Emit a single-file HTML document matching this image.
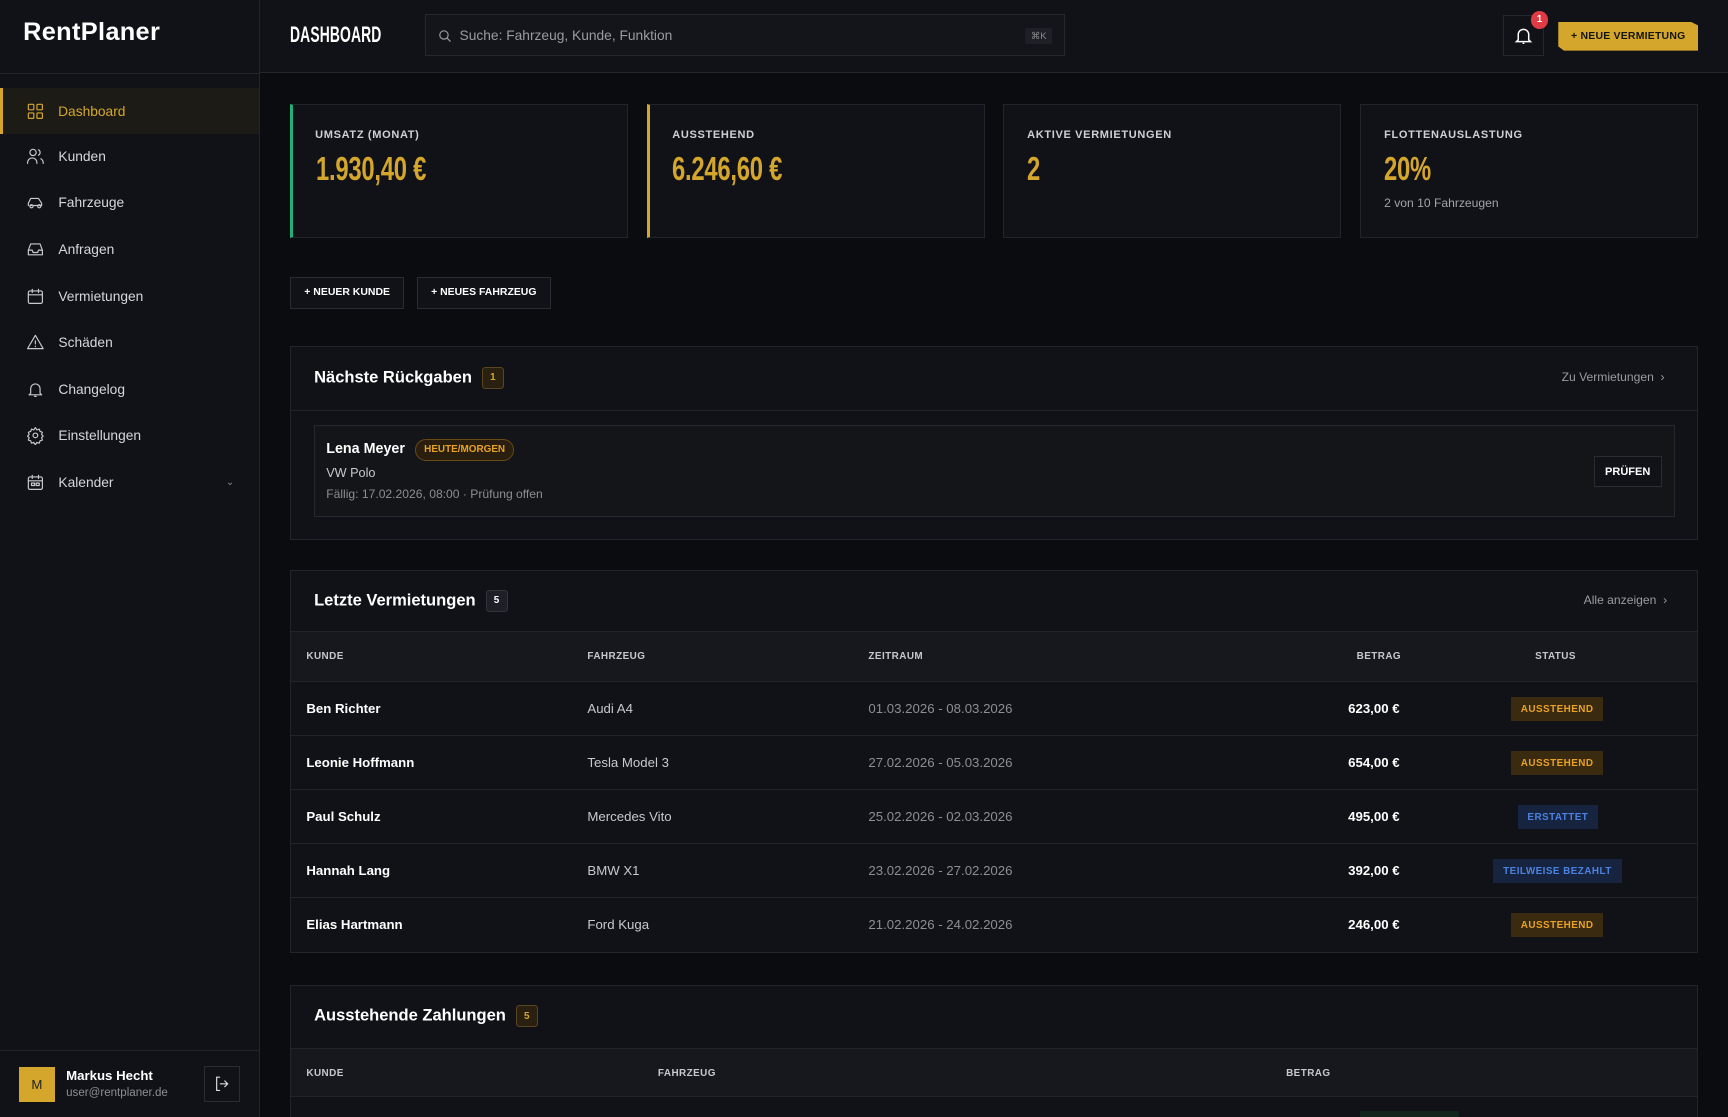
<!DOCTYPE html>
<html><head><meta charset="utf-8"><style>
*{box-sizing:border-box;margin:0;padding:0}
html,body{background:#0b0c10;overflow:hidden}
body{width:1568px;height:1014px;zoom:1.10204;font-family:"Liberation Sans",sans-serif;color:#e8e8ea;position:relative}
.abs{position:absolute}
.side{left:0;top:0;width:236px;height:1014px;background:#111218;border-right:1px solid #23252d}
.logo{left:21px;top:16px;font-size:23px;font-weight:bold;color:#fff;letter-spacing:.3px}
.sidehr{left:0;top:66px;width:236px;border-top:1px solid #23252d}
.nav{left:0;width:235px;height:42px;display:flex;align-items:center;font-size:12.5px;color:#d6d7db}
.nav svg{margin-left:24px;margin-right:12px;width:17px;height:17px;fill:none;stroke:#c9cace;stroke-width:1.5;stroke-linecap:round;stroke-linejoin:round}
.nav.act{background:#1d1b15;color:#d4a72c;border-left:3px solid #d4a72c}
.nav.act svg{margin-left:21px;stroke:#d4a72c}
.head{left:236px;top:0;width:1332px;height:66px;background:#111218;border-bottom:1px solid #23252d}
.cond{font-weight:bold;transform:scaleX(.72);transform-origin:0 0;white-space:nowrap}
.card{background:#111218;border:1px solid #23252d}
.lbl{font-size:10px;font-weight:bold;letter-spacing:.6px;color:#cfd0d4}
.val{font-size:30px;color:#d4a72c;letter-spacing:-.3px}
.btn{border:1px solid #2a2c34;background:#111218;font-size:9.5px;font-weight:bold;color:#fff;display:flex;align-items:center;justify-content:center}
.sec-title{font-size:15px;font-weight:bold;color:#fff}
.cnt{display:inline-flex;width:20px;height:20px;border-radius:3px;align-items:center;justify-content:center;font-size:9px;font-weight:bold;vertical-align:middle;margin-left:9px}
.th{font-size:9px;font-weight:bold;color:#c7c8cc;letter-spacing:.4px}
.row{left:264px;width:1276px;height:49px;border-top:1px solid #22242b}
.row div{position:absolute;top:17px;font-size:12px}
.pill{position:absolute;top:14px;height:21px;font-size:9px;font-weight:bold;letter-spacing:.4px;display:flex;align-items:center;padding:0 9px}
.p-o{background:#3a2a10;color:#e8a325}
.p-b{background:#172440;color:#4b82e0}
</style></head><body>
<div class="abs side"></div>
<div class="abs logo">RentPlaner</div>
<div class="abs sidehr"></div>

<div class="abs nav act" style="top:80px"><svg viewBox="0 0 24 24"><rect x="3" y="3" width="7" height="7" rx="1"/><rect x="14" y="3" width="7" height="7" rx="1"/><rect x="3" y="14" width="7" height="7" rx="1"/><rect x="14" y="14" width="7" height="7" rx="1"/></svg>Dashboard</div>
<div class="abs nav" style="top:121px"><svg viewBox="0 0 24 24"><circle cx="9" cy="7" r="4"/><path d="M2 21v-1a6 6 0 0 1 12 0v1M16 3.5a4 4 0 0 1 0 7M22 21v-1a6 6 0 0 0-3-5"/></svg>Kunden</div>
<div class="abs nav" style="top:163px"><svg viewBox="0 0 24 24"><path d="M3 16v-3l3-6h10l4 6v3M5 16h2M17 16h2M9 16h6"/><circle cx="7" cy="17" r="2"/><circle cx="17" cy="17" r="2"/></svg>Fahrzeuge</div>
<div class="abs nav" style="top:205px"><svg viewBox="0 0 24 24"><path d="M3 13l3-8h12l3 8v6H3zM3 13h5l1 3h6l1-3h5"/></svg>Anfragen</div>
<div class="abs nav" style="top:248px"><svg viewBox="0 0 24 24"><rect x="3" y="5" width="18" height="16" rx="2"/><path d="M3 10h18M8 3v4M16 3v4"/></svg>Vermietungen</div>
<div class="abs nav" style="top:290px"><svg viewBox="0 0 24 24"><path d="M12 3L2 20h20zM12 10v4M12 17v.5"/></svg>Schäden</div>
<div class="abs nav" style="top:332px"><svg viewBox="0 0 24 24"><path d="M6 17V11a6 6 0 0 1 12 0v6l2 2H4zM11 21h2"/></svg>Changelog</div>
<div class="abs nav" style="top:374px"><svg viewBox="0 0 24 24"><circle cx="12" cy="12" r="3"/><path d="M12 2l2 3 3-1 1 3 3 1-1 3 2 2-2 2 1 3-3 1-1 3-3-1-2 3-2-3-3 1-1-3-3-1 1-3-2-2 2-2-1-3 3-1 1-3 3 1z"/></svg>Einstellungen</div>
<div class="abs nav" style="top:417px"><svg viewBox="0 0 24 24"><rect x="3" y="5" width="18" height="16" rx="2"/><path d="M3 10h18M8 3v4M16 3v4"/><rect x="7" y="13" width="4" height="3"/><rect x="13" y="13" width="4" height="3"/></svg>Kalender<span style="position:absolute;left:205px;font-size:9px;color:#888">⌄</span></div>

<div class="abs" style="left:0;top:953px;width:236px;border-top:1px solid #23252d"></div>
<div class="abs" style="left:17px;top:968px;width:33px;height:32px;background:#d4a72c;color:#222;font-size:12px;display:flex;align-items:center;justify-content:center">M</div>
<div class="abs" style="left:60px;top:969px;font-size:12px;font-weight:bold;color:#fff">Markus Hecht</div>
<div class="abs" style="left:60px;top:986px;font-size:10.5px;color:#8d8e94">user@rentplaner.de</div>
<div class="abs" style="left:185px;top:967px;width:33px;height:33px;border:1px solid #2a2c34;display:flex;align-items:center;justify-content:center"><svg width="16" height="16" viewBox="0 0 24 24" fill="none" stroke="#ddd" stroke-width="1.6" stroke-linecap="round"><path d="M9 3H5v18h4M10 12h10M16 8l4 4-4 4"/></svg></div>

<div class="abs head"></div>
<div class="abs cond" style="left:263px;top:20px;font-size:20px;color:#fff;letter-spacing:.2px;transform:scaleX(.63)">DASHBOARD</div>
<div class="abs" style="left:386px;top:13px;width:580px;height:38px;border:1px solid #262830;background:#14151b"></div>
<svg class="abs" style="left:397px;top:26px" width="13" height="13" viewBox="0 0 24 24" fill="none" stroke="#9a9ba0" stroke-width="2"><circle cx="10" cy="10" r="7"/><path d="M15 15l6 6"/></svg>
<div class="abs" style="left:417px;top:25px;font-size:12.5px;color:#9a9ba0">Suche: Fahrzeug, Kunde, Funktion</div>
<div class="abs" style="left:930px;top:25px;width:25px;height:15px;background:#1f2027;border-radius:2px;font-size:8.5px;color:#888;text-align:center;line-height:15px">⌘K</div>
<div class="abs" style="left:1364px;top:14px;width:37px;height:37px;border:1px solid #262830"></div>
<svg class="abs" style="left:1373px;top:23px" width="19" height="19" viewBox="0 0 24 24" fill="none" stroke="#fff" stroke-width="1.7"><path d="M6 17V11a6 6 0 0 1 12 0v6l2 2H4zM11 21h2"/></svg>
<div class="abs" style="left:1389px;top:10px;width:16px;height:16px;border-radius:50%;background:#e03a45;color:#fff;font-size:9px;font-weight:bold;text-align:center;line-height:16px">1</div>
<div class="abs" style="left:1414px;top:20px;width:127px;height:26px;background:#d4a72c;clip-path:polygon(0 0,95% 0,100% 12%,100% 100%,4% 100%,0 85%);color:#15150f;font-size:9.5px;font-weight:bold;display:flex;align-items:center;justify-content:center;letter-spacing:.2px">+ NEUE VERMIETUNG</div>

<!-- stat cards -->
<div class="abs card" style="left:263px;top:94px;width:307px;height:122px;border-left:3px solid #21b07a"></div>
<div class="abs lbl" style="left:286px;top:117px">UMSATZ (MONAT)</div>
<div class="abs cond val" style="left:287px;top:137px">1.930,40 €</div>
<div class="abs card" style="left:587px;top:94px;width:307px;height:122px;border-left:3px solid #d4a72c"></div>
<div class="abs lbl" style="left:610px;top:117px">AUSSTEHEND</div>
<div class="abs cond val" style="left:610px;top:137px">6.246,60 €</div>
<div class="abs card" style="left:910px;top:94px;width:307px;height:122px"></div>
<div class="abs lbl" style="left:932px;top:117px">AKTIVE VERMIETUNGEN</div>
<div class="abs cond val" style="left:932px;top:137px">2</div>
<div class="abs card" style="left:1234px;top:94px;width:307px;height:122px"></div>
<div class="abs lbl" style="left:1256px;top:117px">FLOTTENAUSLASTUNG</div>
<div class="abs cond val" style="left:1256px;top:137px">20%</div>
<div class="abs" style="left:1256px;top:178px;font-size:11px;color:#a2a3a8">2 von 10 Fahrzeugen</div>

<div class="abs btn" style="left:263px;top:251px;width:104px;height:29px">+ NEUER KUNDE</div>
<div class="abs btn" style="left:378px;top:251px;width:122px;height:29px">+ NEUES FAHRZEUG</div>

<!-- section 1 -->
<div class="abs card" style="left:263px;top:314px;width:1278px;height:176px"></div>
<div class="abs sec-title" style="left:285px;top:333px">Nächste Rückgaben<span class="cnt" style="background:#2a2010;border:1px solid #5a4520;color:#d4a72c">1</span></div>
<div class="abs" style="left:1417px;top:336px;font-size:11px;color:#9a9ba0">Zu Vermietungen &nbsp;›</div>
<div class="abs" style="left:264px;top:372px;width:1276px;border-top:1px solid #22242b"></div>
<div class="abs" style="left:285px;top:386px;width:1235px;height:83px;border:1px solid #262830;background:#141519"></div>
<div class="abs" style="left:296px;top:400px;font-size:13px;font-weight:bold;color:#fff">Lena Meyer</div>
<div class="abs" style="left:377px;top:398px;height:20px;padding:0 7px;border:1px solid #6a4a15;border-radius:10px;background:#2a1f0e;color:#e8a325;font-size:9px;font-weight:bold;line-height:18px">HEUTE/MORGEN</div>
<div class="abs" style="left:296px;top:423px;font-size:11.5px;color:#c8c9cd">VW Polo</div>
<div class="abs" style="left:296px;top:442px;font-size:11px;color:#8d8e94">Fällig: 17.02.2026, 08:00 · Prüfung offen</div>
<div class="abs btn" style="left:1446px;top:414px;width:62px;height:28px;font-size:10px">PRÜFEN</div>

<!-- section 2 -->
<div class="abs card" style="left:263px;top:517px;width:1278px;height:348px"></div>
<div class="abs sec-title" style="left:285px;top:535px">Letzte Vermietungen<span class="cnt" style="background:#1f2027;border:1px solid #33353d;color:#fff">5</span></div>
<div class="abs" style="left:1437px;top:538px;font-size:11px;color:#9a9ba0">Alle anzeigen &nbsp;›</div>
<div class="abs" style="left:264px;top:573px;width:1276px;height:45px;background:#17181e;border-top:1px solid #22242b"></div>
<div class="abs th" style="left:278px;top:591px">KUNDE</div>
<div class="abs th" style="left:533px;top:591px">FAHRZEUG</div>
<div class="abs th" style="left:788px;top:591px">ZEITRAUM</div>
<div class="abs th" style="left:1231px;top:591px">BETRAG</div>
<div class="abs th" style="left:1393px;top:591px">STATUS</div>

<div class="abs row" style="top:618px"><div style="left:14px;font-weight:bold;color:#fff">Ben Richter</div><div style="left:269px;color:#c8c9cd">Audi A4</div><div style="left:524px;color:#8d8e94">01.03.2026 - 08.03.2026</div><div style="right:270px;font-weight:bold;color:#fff">623,00 €</div><span class="pill p-o" style="left:1107px">AUSSTEHEND</span></div>
<div class="abs row" style="top:667px"><div style="left:14px;font-weight:bold;color:#fff">Leonie Hoffmann</div><div style="left:269px;color:#c8c9cd">Tesla Model 3</div><div style="left:524px;color:#8d8e94">27.02.2026 - 05.03.2026</div><div style="right:270px;font-weight:bold;color:#fff">654,00 €</div><span class="pill p-o" style="left:1107px">AUSSTEHEND</span></div>
<div class="abs row" style="top:716px"><div style="left:14px;font-weight:bold;color:#fff">Paul Schulz</div><div style="left:269px;color:#c8c9cd">Mercedes Vito</div><div style="left:524px;color:#8d8e94">25.02.2026 - 02.03.2026</div><div style="right:270px;font-weight:bold;color:#fff">495,00 €</div><span class="pill p-b" style="left:1113px">ERSTATTET</span></div>
<div class="abs row" style="top:765px"><div style="left:14px;font-weight:bold;color:#fff">Hannah Lang</div><div style="left:269px;color:#c8c9cd">BMW X1</div><div style="left:524px;color:#8d8e94">23.02.2026 - 27.02.2026</div><div style="right:270px;font-weight:bold;color:#fff">392,00 €</div><span class="pill p-b" style="left:1091px">TEILWEISE BEZAHLT</span></div>
<div class="abs row" style="top:814px"><div style="left:14px;font-weight:bold;color:#fff">Elias Hartmann</div><div style="left:269px;color:#c8c9cd">Ford Kuga</div><div style="left:524px;color:#8d8e94">21.02.2026 - 24.02.2026</div><div style="right:270px;font-weight:bold;color:#fff">246,00 €</div><span class="pill p-o" style="left:1107px">AUSSTEHEND</span></div>

<!-- section 3 -->
<div class="abs card" style="left:263px;top:894px;width:1278px;height:130px"></div>
<div class="abs sec-title" style="left:285px;top:912px">Ausstehende Zahlungen<span class="cnt" style="background:#2a2010;border:1px solid #5a4520;color:#d4a72c">5</span></div>
<div class="abs" style="left:264px;top:951px;width:1276px;height:44px;background:#17181e;border-top:1px solid #22242b;border-bottom:1px solid #22242b"></div>
<div class="abs th" style="left:278px;top:969px">KUNDE</div>
<div class="abs th" style="left:597px;top:969px">FAHRZEUG</div>
<div class="abs th" style="left:1167px;top:969px">BETRAG</div>
<div class="abs" style="left:1234px;top:1008px;width:90px;height:8px;background:#12251c"></div>
</body></html>
